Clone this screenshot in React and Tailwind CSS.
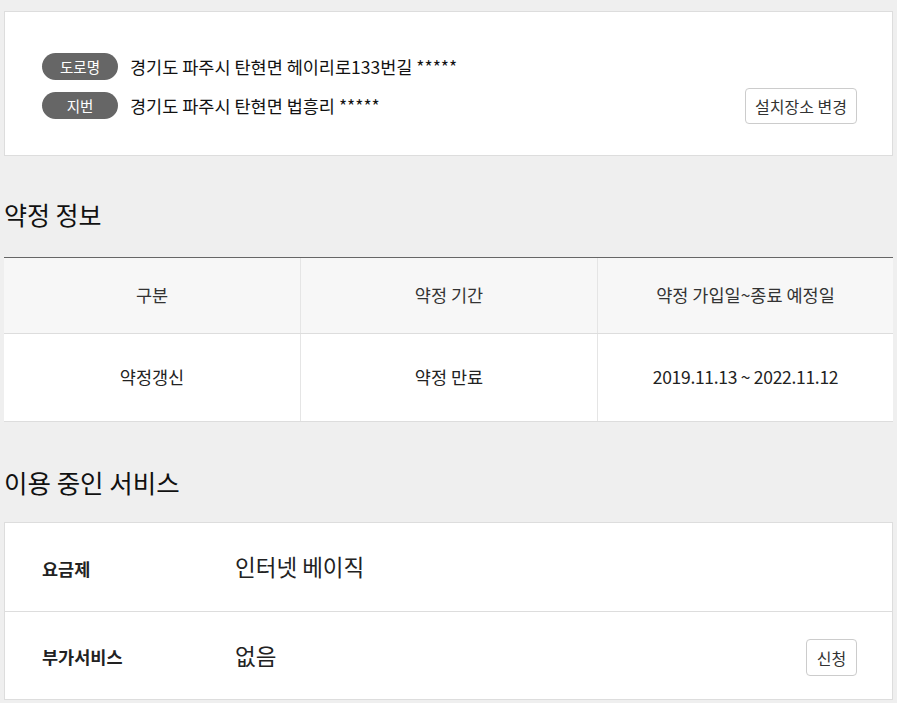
import React from "react";

const font = { fontFamily: '"Noto Sans CJK KR", "Noto Sans", sans-serif' };

function Badge({ children }) {
  return (
    <span className="flex h-[27px] w-[76px] shrink-0 items-center justify-center rounded-full bg-[#666] text-[14.5px] text-white">
      {children}
    </span>
  );
}

export default function App() {
  const heads = ["구분", "약정 기간", "약정 가입일~종료 예정일"];
  const cells = ["약정갱신", "약정 만료", "2019.11.13 ~ 2022.11.12"];

  return (
    <div className="min-h-[703px] bg-[#efefef] px-1 pt-[11px] text-[#111]" style={font}>
      <div className="flex items-end justify-between border border-[#dddddd] bg-white pb-[31px] pl-[37px] pr-[35px] pt-[41px]">
        <div className="mb-[5px] flex flex-col gap-3">
          <div className="flex items-center gap-3">
            <Badge>도로명</Badge>
            <span className="text-[17.5px] leading-[27px]">경기도 파주시 탄현면 헤이리로133번길 *****</span>
          </div>
          <div className="flex items-center gap-3">
            <Badge>지번</Badge>
            <span className="text-[17.5px] leading-[27px]">경기도 파주시 탄현면 법흥리 *****</span>
          </div>
        </div>
        <button className="h-9 w-[112px] rounded border border-[#cccccc] bg-white text-[16px] text-[#333]">
          설치장소 변경
        </button>
      </div>

      <h2 className="mt-[38px] mb-[23px] text-[25px] leading-[40px] text-[#111]">약정 정보</h2>

      <div className="border-t border-[#666]">
        <div className="grid grid-cols-[297px_297px_1fr] border-b border-[#dddddd] bg-[#f7f7f7]">
          {heads.map((h, i) => (
            <div key={h} className={`flex h-[75px] items-center justify-center text-[17.5px] text-[#333] ${i < 2 ? "border-r border-[#e5e5e5]" : ""}`}>
              {h}
            </div>
          ))}
        </div>
        <div className="grid grid-cols-[297px_297px_1fr] border-b border-[#dddddd] bg-white">
          {cells.map((c, i) => (
            <div key={c} className={`flex h-[87px] items-center justify-center text-[17.5px] text-[#222] ${i === 2 ? "tracking-[-0.3px]" : "border-r border-[#e5e5e5]"}`}>
              {c}
            </div>
          ))}
        </div>
      </div>

      <h2 className="mt-[42px] mb-[22px] text-[25.5px] leading-[36px] text-[#111]">이용 중인 서비스</h2>

      <div className="border border-[#dddddd] bg-white">
        <div className="flex h-[89px] items-center border-b border-[#dddddd] pl-[37px] pr-[35px]">
          <span className="mt-1 w-[193px] text-[17.5px] font-bold text-[#222]">요금제</span>
          <span className="text-[22.5px] text-[#222]">인터넷 베이직</span>
        </div>
        <div className="flex h-[87px] items-center pl-[37px] pr-[35px]">
          <span className="mt-1 w-[193px] text-[17.5px] font-bold text-[#222]">부가서비스</span>
          <span className="flex-1 text-[22.5px] text-[#222]">없음</span>
          <button className="mt-1 h-[37px] w-[51px] rounded border border-[#cccccc] bg-white text-[16px] text-[#333]">신청</button>
        </div>
      </div>
    </div>
  );
}
